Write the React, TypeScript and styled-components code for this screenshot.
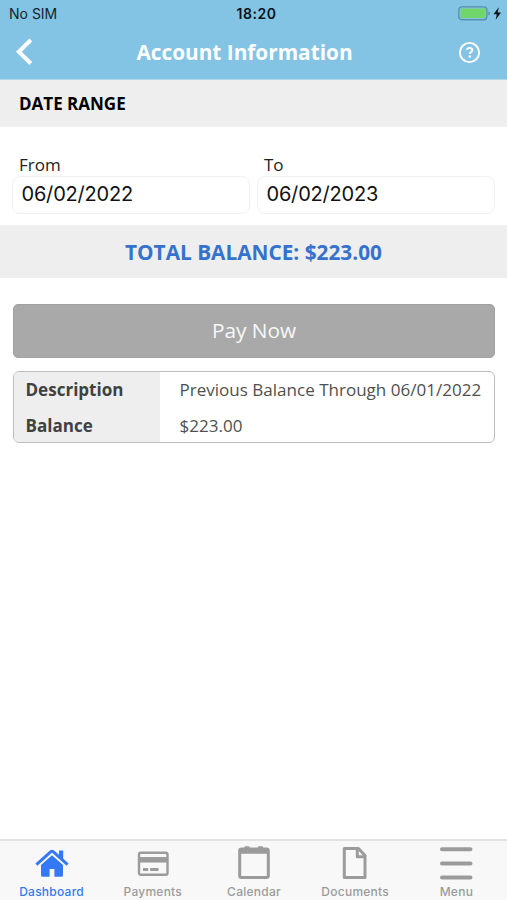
import React from "react";
import styled, { createGlobalStyle } from "styled-components";

const GlobalStyle = createGlobalStyle`
  *, *::before, *::after { box-sizing: border-box; }
  html, body { margin: 0; background: #fff; }
  body { font-family: "Open Sans", "Noto Sans", sans-serif; color: #111; }
  svg { display: block; }
`;

const Screen = styled.div`
  display: flex;
  flex-direction: column;
  width: 507px;
  height: 900px;
  overflow: hidden;
  background: #fff;
`;

const Top = styled.header`
  height: 80px;
  flex: none;
  background: #83c3e4;
  border-bottom: 1px solid #b4d6e6;
`;

const StatusBar = styled.div`
  display: grid;
  grid-template-columns: 1fr auto 1fr;
  align-items: center;
  height: 27px;
  padding: 0 5px 0 9px;
  font: 400 14px/27px Inter, sans-serif;
  color: #14252e;
`;

const Clock = styled.span`
  font-weight: 600;
  letter-spacing: 0.5px;
  padding-left: 2px;
  color: #07131a;
`;

const Power = styled.div`
  display: flex;
  justify-content: flex-end;
`;

const NavBar = styled.div`
  display: grid;
  grid-template-columns: 50px 1fr 68px;
  align-items: center;
  height: 50px;
  color: #fff;
`;

const NavButton = styled.button<{ $inset: number }>`
  border: 0;
  background: none;
  color: inherit;
  padding: 0 0 0 ${(p) => p.$inset}px;
`;

const Title = styled.h1`
  margin: 0;
  text-align: center;
  font-size: 20.8px;
  line-height: 50px;
  font-weight: 700;
`;

const SectionHeading = styled.h2`
  margin: 0;
  flex: none;
  height: 47px;
  padding-left: 19px;
  background: #eee;
  color: #000;
  font-size: 17px;
  line-height: 47px;
  font-weight: 700;
`;

const DateRange = styled.section`
  display: grid;
  grid-template-columns: 1fr 1fr;
  gap: 7px;
  height: 98px;
  flex: none;
  padding: 27px 12px 0 12px;
`;

const Field = styled.label`
  display: flex;
  flex-direction: column;
`;

const FieldLabel = styled.span`
  height: 22px;
  padding-left: 7px;
  font-size: 17px;
  line-height: 22px;
  color: #222;
`;

const DateValue = styled.span`
  height: 38px;
  padding-left: 8.5px;
  border: 1px solid #f0f0f0;
  border-radius: 8px;
  font: 400 20px/34px Inter, sans-serif;
  letter-spacing: -0.2px;
  color: #111;
`;

const Total = styled.div`
  flex: none;
  height: 53px;
  background: #eee;
  color: #3572cd;
  text-align: center;
  font-size: 20.8px;
  line-height: 55px;
  font-weight: 700;
`;

const PayButton = styled.button`
  flex: none;
  height: 54px;
  margin: 26px 12px 0 13px;
  padding: 0 0 2px;
  border: 1px solid #a2a2a2;
  border-radius: 5px;
  background: #a9a9a9;
  color: #f7f7f7;
  font: 400 20.8px/50px "Open Sans", sans-serif;
`;

const Details = styled.dl`
  display: grid;
  grid-template-columns: 146px 1fr;
  grid-template-rows: 36px 34px;
  flex: none;
  height: 72px;
  margin: 13px 12px 0 13px;
  border: 1px solid #bdbdbd;
  border-radius: 6px;
  overflow: hidden;
  font-size: 17.05px;
  line-height: 35px;
`;

const Term = styled.dt`
  padding-left: 11.5px;
  background: #eee;
  color: #414141;
  font-weight: 700;
`;

const Detail = styled.dd`
  margin: 0;
  padding-left: 19.5px;
  color: #505050;
  white-space: nowrap;
`;

const TabBar = styled.nav`
  display: grid;
  grid-template-columns: repeat(5, 1fr);
  height: 61px;
  margin-top: auto;
  flex: none;
  padding: 0 0 0 1px;
  border-top: 2px solid #e2e2e2;
  background: #f8f8f8;
`;

const Tab = styled.a<{ $active?: boolean }>`
  display: flex;
  flex-direction: column;
  align-items: center;
  padding-top: 4px;
  color: ${(p) => (p.$active ? "#3478f6" : "#9b9b9b")};
  font: 500 12px/16px Inter, sans-serif;
  letter-spacing: 0.25px;
`;

const TabLabel = styled.span`
  padding-top: 3px;
`;

const HomeIcon = () => (
  <svg width="36" height="36" viewBox="0 0 36 36" fill="currentColor">
    <path d="M18 9.2 7 18.6V30.2Q7 31.8 8.6 31.8H15.6V24H20.4V31.8H27.4Q29 31.8 29 30.2V18.6Z" />
    <path d="M3.2 19.6 17 7.4Q18 6.6 19 7.4L32.8 19.6" fill="none" stroke="#f8f8f8" strokeWidth="5.5" />
    <path d="M3.5 18.6 16.9 6.7Q18 5.8 19.1 6.7L32.5 18.6" fill="none" stroke="currentColor" strokeWidth="3" strokeLinecap="square" strokeLinejoin="round" />
    <path d="M25 5.5H29.2V16L25 12.3Z" />
  </svg>
);

const CardIcon = () => (
  <svg width="36" height="36" viewBox="0 0 36 36" fill="none" stroke="currentColor">
    <rect x="4" y="7.8" width="28.5" height="22" rx="1.8" strokeWidth="2.4" />
    <path d="M4 14.8H32.5" strokeWidth="5.5" />
    <path d="M8 24.4H13.2M15.2 24.4H23.5" strokeWidth="3" />
  </svg>
);

const CalendarIcon = () => (
  <svg width="36" height="36" viewBox="0 0 36 36" fill="none" stroke="currentColor">
    <rect x="3.7" y="4" width="28.6" height="28.5" rx="1.8" strokeWidth="3" />
    <path d="M3.4 6H32.6" strokeWidth="5.5" />
    <path d="M9.5 2.5H12.5M23 2.5H26" strokeWidth="2.4" strokeLinecap="round" />
  </svg>
);

const DocumentIcon = () => (
  <svg width="36" height="36" viewBox="0 0 36 36" fill="none" stroke="currentColor" strokeWidth="3" strokeLinejoin="round">
    <path d="M7.3 3.5H21.5L28 10.5V32.5H7.3Z" />
    <path d="M20.3 4V11.7H28" />
  </svg>
);

const MenuIcon = () => (
  <svg width="36" height="36" viewBox="0 0 36 36" stroke="currentColor" strokeWidth="4" strokeLinecap="round">
    <path d="M4 4.2H32.5M4 18.4H32.5M4 32.6H32.5" />
  </svg>
);

const tabs = [
  { label: "Dashboard", Icon: HomeIcon, active: true },
  { label: "Payments", Icon: CardIcon },
  { label: "Calendar", Icon: CalendarIcon },
  { label: "Documents", Icon: DocumentIcon },
  { label: "Menu", Icon: MenuIcon },
];

export default function App() {
  return (
    <>
      <GlobalStyle />
      <Screen>
        <Top>
          <StatusBar>
            <span>No SIM</span>
            <Clock>18:20</Clock>
            <Power>
              <svg width="44" height="16" viewBox="0 0 44 16">
                <rect x="0.8" y="0.9" width="28" height="12.8" rx="3" fill="none" stroke="#5b8fab" strokeWidth="1.4" />
                <rect x="2.6" y="2.6" width="24.5" height="9.4" rx="1.2" fill="#70d669" />
                <path d="M30.3 5.2v4.2q1.6-.4 1.6-2.1T30.3 5.2" fill="#5b8fab" />
                <path d="M40.8 1.2 35.5 8.2H38.8L37.7 13.7 43 6.4H39.7Z" fill="#06131a" />
              </svg>
            </Power>
          </StatusBar>
          <NavBar>
            <NavButton $inset={15} aria-label="Back">
              <svg width="20" height="28" viewBox="0 0 20 28" fill="none" stroke="#fff" strokeWidth="4">
                <path d="M15.8 2 3.8 13.7 15.8 25.5" />
              </svg>
            </NavButton>
            <Title>Account Information</Title>
            <NavButton $inset={19} aria-label="Help">
              <svg width="23" height="23" viewBox="0 0 23 23" fill="none" stroke="#fff">
                <circle cx="11.5" cy="11.5" r="9.6" strokeWidth="1.9" />
                <path d="M8.7 8.8Q9.2 7 11.7 7T14.4 9.2C14.4 11 11.8 10.8 11.8 13.1" strokeWidth="2" />
                <path d="M11.8 14.4V16.6" strokeWidth="2.2" />
              </svg>
            </NavButton>
          </NavBar>
        </Top>
        <SectionHeading>DATE RANGE</SectionHeading>
        <DateRange>
          <Field>
            <FieldLabel>From</FieldLabel>
            <DateValue>06/02/2022</DateValue>
          </Field>
          <Field>
            <FieldLabel>To</FieldLabel>
            <DateValue>06/02/2023</DateValue>
          </Field>
        </DateRange>
        <Total>TOTAL BALANCE: $223.00</Total>
        <PayButton>Pay Now</PayButton>
        <Details>
          <Term>Description</Term>
          <Detail>Previous Balance Through 06/01/2022</Detail>
          <Term>Balance</Term>
          <Detail>$223.00</Detail>
        </Details>
        <TabBar>
          {tabs.map(({ label, Icon, active }) => (
            <Tab key={label} $active={active}>
              <Icon />
              <TabLabel>{label}</TabLabel>
            </Tab>
          ))}
        </TabBar>
      </Screen>
    </>
  );
}
